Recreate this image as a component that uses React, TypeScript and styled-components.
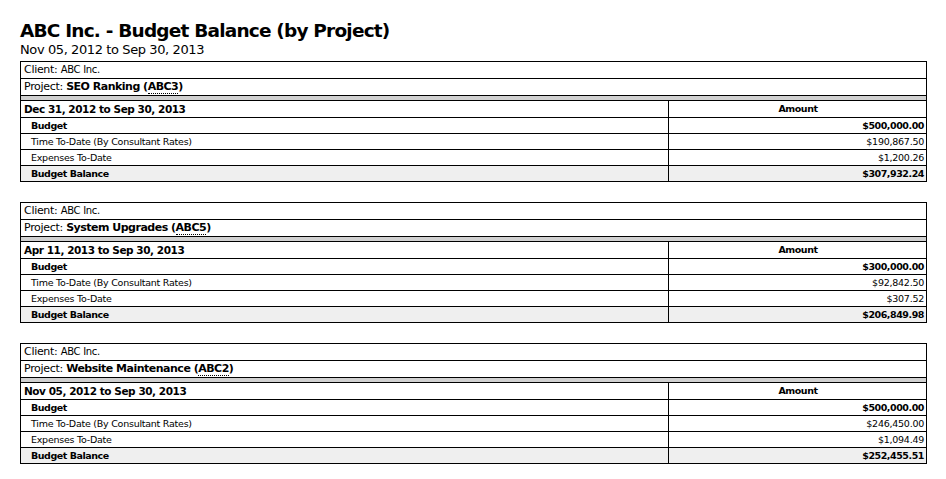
import React from "react";
import styled, { createGlobalStyle } from "styled-components";

const Global = createGlobalStyle`
  html, body { margin: 0; padding: 0; background: #fff; }
  body { font-family: "DejaVu Sans", Verdana, sans-serif; color: #000; }
`;

const Page = styled.div`
  padding: 19px 19px 0 20px;
  width: 907px;
`;

const Title = styled.h1`
  margin: 0;
  font-size: 18.5px;
  letter-spacing: -0.8px;
  font-weight: bold;
  line-height: 23px;
`;

const Subtitle = styled.div`
  font-size: 13px;
  letter-spacing: -0.4px;
  line-height: 15px;
  margin-bottom: 4px;
`;

const Block = styled.div`
  border: 1px solid #000;
  margin-bottom: 20px;
`;

const InfoRow = styled.div`
  height: 16px;
  line-height: 16px;
  font-size: 11px;
  letter-spacing: -0.3px;
  padding-left: 3px;
  border-bottom: 1px solid #000;
  white-space: nowrap;
`;

const Small = styled.span`
  font-size: 10px;
`;

const Strong = styled.b`
  font-weight: bold;
  letter-spacing: -0.5px;
`;

const Code = styled.abbr`
  text-decoration: none;
  border-bottom: 1px dotted #000;
`;

const Separator = styled.div`
  height: 4px;
  background: #d0d0d0;
  border-bottom: 1px solid #000;
`;

const Row = styled.div<{ $shade?: boolean; $last?: boolean }>`
  display: grid;
  grid-template-columns: 647px 1fr;
  background: ${(p) => (p.$shade ? "#efefef" : "#fff")};
  border-bottom: ${(p) => (p.$last ? "none" : "1px solid #000")};
`;

const Cell = styled.div<{ $bold?: boolean; $indent?: boolean; $align?: string; $size?: number; $h?: number }>`
  height: ${(p) => p.$h ?? 15}px;
  line-height: ${(p) => p.$h ?? 15}px;
  font-size: ${(p) => p.$size ?? 9.5}px;
  letter-spacing: ${(p) => (p.$bold ? -0.45 : -0.25)}px;
  font-weight: ${(p) => (p.$bold ? "bold" : "normal")};
  padding: 0 2px 0 ${(p) => (p.$indent ? 10 : 3)}px;
  text-align: ${(p) => p.$align ?? "left"};
  white-space: nowrap;
  & + & {
    border-left: 1px solid #000;
  }
`;

type Project = {
  name: string;
  code: string;
  range: string;
  budget: string;
  time: string;
  expenses: string;
  balance: string;
};

const projects: Project[] = [
  { name: "SEO Ranking", code: "ABC3", range: "Dec 31, 2012 to Sep 30, 2013", budget: "$500,000.00", time: "$190,867.50", expenses: "$1,200.26", balance: "$307,932.24" },
  { name: "System Upgrades", code: "ABC5", range: "Apr 11, 2013 to Sep 30, 2013", budget: "$300,000.00", time: "$92,842.50", expenses: "$307.52", balance: "$206,849.98" },
  { name: "Website Maintenance", code: "ABC2", range: "Nov 05, 2012 to Sep 30, 2013", budget: "$500,000.00", time: "$246,450.00", expenses: "$1,094.49", balance: "$252,455.51" },
];

export default function App() {
  return (
    <Page>
      <Global />
      <Title>ABC Inc. - Budget Balance (by Project)</Title>
      <Subtitle>Nov 05, 2012 to Sep 30, 2013</Subtitle>
      {projects.map((p) => (
        <Block key={p.code}>
          <InfoRow>
            Client: <Small>ABC Inc.</Small>
          </InfoRow>
          <InfoRow>
            Project: <Strong>{p.name} (<Code title={p.code}>{p.code}</Code>)</Strong>
          </InfoRow>
          <Separator />
          <Row>
            <Cell $bold $size={10.5} $h={16}>{p.range}</Cell>
            <Cell $bold $align="center" $h={16}>Amount</Cell>
          </Row>
          <Row>
            <Cell $bold $indent>Budget</Cell>
            <Cell $bold $align="right">{p.budget}</Cell>
          </Row>
          <Row>
            <Cell $indent>Time To-Date (By Consultant Rates)</Cell>
            <Cell $align="right">{p.time}</Cell>
          </Row>
          <Row>
            <Cell $indent>Expenses To-Date</Cell>
            <Cell $align="right">{p.expenses}</Cell>
          </Row>
          <Row $shade $last>
            <Cell $bold $indent>Budget Balance</Cell>
            <Cell $bold $align="right">{p.balance}</Cell>
          </Row>
        </Block>
      ))}
    </Page>
  );
}
